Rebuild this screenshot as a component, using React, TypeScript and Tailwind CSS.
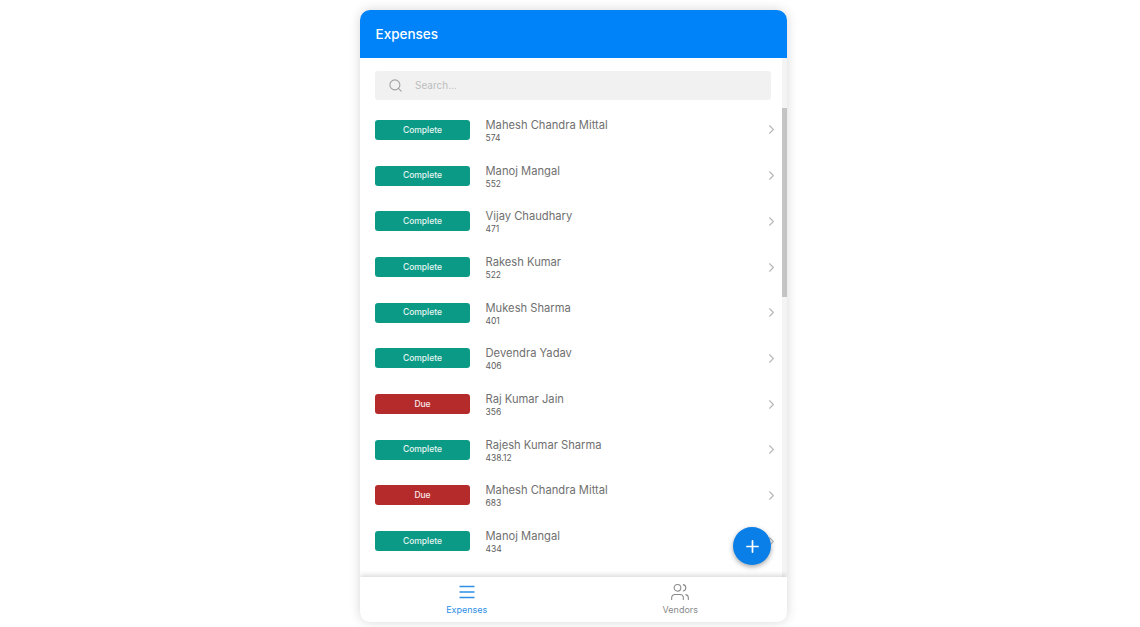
import { Search, ChevronRight, Plus, Users } from 'lucide-react'

const rows = [
  { name: 'Mahesh Chandra Mittal', amount: '574', status: 'Complete' },
  { name: 'Manoj Mangal', amount: '552', status: 'Complete' },
  { name: 'Vijay Chaudhary', amount: '471', status: 'Complete' },
  { name: 'Rakesh Kumar', amount: '522', status: 'Complete' },
  { name: 'Mukesh Sharma', amount: '401', status: 'Complete' },
  { name: 'Devendra Yadav', amount: '406', status: 'Complete' },
  { name: 'Raj Kumar Jain', amount: '356', status: 'Due' },
  { name: 'Rajesh Kumar Sharma', amount: '438.12', status: 'Complete' },
  { name: 'Mahesh Chandra Mittal', amount: '683', status: 'Due' },
  { name: 'Manoj Mangal', amount: '434', status: 'Complete' },
]

function ExpenseRow({ name, amount, status }: { name: string; amount: string; status: string }) {
  return (
    <div className="flex h-[45.7px] shrink-0 items-center pl-[15px] pr-[3px]">
      <div
        className={
          status === 'Due'
            ? 'flex h-[20px] w-[95px] shrink-0 items-center justify-center rounded-[3px] bg-[#b52b2b] text-[8.5px] font-medium text-white/90'
            : 'flex h-[20px] w-[95px] shrink-0 items-center justify-center rounded-[3px] bg-[#0a9a85] text-[8.5px] font-medium text-white/90'
        }
      >
        {status}
      </div>
      <div className="ml-[15.5px] flex-1 pt-[2px]">
        <div className="text-[11.2px] leading-[15px] text-[#707070]">{name}</div>
        <div className="text-[8.5px] leading-[11px] text-[#606060]">{amount}</div>
      </div>
      <ChevronRight size={15} strokeWidth={1.8} className="text-[#b8b8b8]" />
    </div>
  )
}

export default function App() {
  return (
    <div className="h-[627px] overflow-hidden bg-white pl-[360px] pt-[10px] font-['Inter',sans-serif]">
      <div className="relative flex h-[612px] w-[427px] flex-col overflow-hidden rounded-[10px] bg-white shadow-[0_0_12px_rgba(0,0,0,0.16)]">
        <header className="flex h-[48px] shrink-0 items-center bg-[#0082f8] pl-[15.5px] text-[13.5px] font-medium text-white">
          Expenses
        </header>

        <div className="flex min-h-0 flex-1">
          <div className="min-w-0 flex-1 overflow-hidden">
            <div className="mx-[15px] mt-[13px] flex h-[29px] w-[396px] items-center rounded-[3px] bg-[#f1f1f1] pl-[13px]">
              <Search size={15} strokeWidth={1.7} className="text-[#a0a0a0]" />
              <span className="ml-[12px] text-[10px] text-[#bdbdbd]">Search...</span>
            </div>
            <div className="mt-[7.1px] flex flex-col">
              {rows.map((row, i) => (
                <ExpenseRow key={i} {...row} />
              ))}
            </div>
          </div>
          <div className="w-[5px] shrink-0 bg-[#f4f4f4] pt-[50px]">
            <div className="h-[189px] w-full bg-[#c4c4c4]" />
          </div>
        </div>

        <nav className="relative flex h-[45px] shrink-0 bg-white shadow-[0_-2px_5px_rgba(0,0,0,0.15)]">
          <div className="flex flex-1 flex-col items-center pt-[5px] text-[#2f8fe6]">
            <svg width="20" height="20" viewBox="0 0 20 20" fill="none" stroke="currentColor" strokeWidth="1.7">
              <path d="M2.5 4.5h15M2.5 10h15M2.5 15.5h15" />
            </svg>
            <span className="mt-[2px] text-[9px] leading-[12px]">Expenses</span>
          </div>
          <div className="flex flex-1 flex-col items-center pt-[5px] text-[#8a8a8a]">
            <Users size={20} strokeWidth={1.3} />
            <span className="mt-[2px] text-[9px] leading-[12px]">Vendors</span>
          </div>
        </nav>

        <button className="absolute left-[373px] top-[517px] flex h-[38px] w-[38px] items-center justify-center rounded-full bg-[#0a7fe8] text-white shadow-[0_2px_5px_rgba(0,0,0,0.35)]">
          <Plus size={19} strokeWidth={2.2} />
        </button>
      </div>
    </div>
  )
}
